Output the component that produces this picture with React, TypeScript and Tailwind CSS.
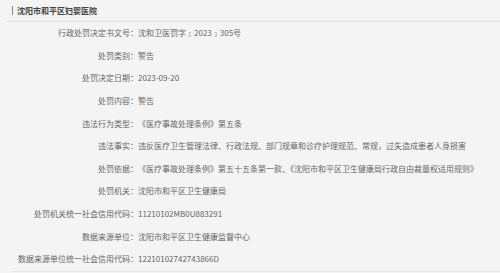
import React from "react";

const rows: [string, string][] = [
  ["行政处罚决定书文号：", "沈和卫医罚字﹝2023﹞305号"],
  ["处罚类别：", "警告"],
  ["处罚决定日期：", "2023-09-20"],
  ["处罚内容：", "警告"],
  ["违法行为类型：", "《医疗事故处理条例》第五条"],
  ["违法事实：", "违反医疗卫生管理法律、行政法规、部门规章和诊疗护理规范、常规，过失造成患者人身损害"],
  ["处罚依据：", "《医疗事故处理条例》第五十五条第一款、《沈阳市和平区卫生健康局行政自由裁量权适用规则》"],
  ["处罚机关：", "沈阳市和平区卫生健康局"],
  ["处罚机关统一社会信用代码：", "11210102MB0U883291"],
  ["数据来源单位：", "沈阳市和平区卫生健康监督中心"],
  ["数据来源单位统一社会信用代码：", "12210102742743866D"],
];

export default function App() {
  return (
    <div
      className="w-[500px] h-[273px] bg-[#f4f4f4] overflow-hidden"
      style={{ fontFamily: '"Noto Sans CJK SC", "Noto Sans", sans-serif' }}
    >
      <div className="ml-[6px] border-b border-[#dedede] h-[22px] flex items-center pl-[6px]">
        <span className="w-px h-[9px] bg-[#888] mr-[4px]" />
        <span className="text-[8px] font-bold text-[#444] leading-none">沈阳市和平区妇婴医院</span>
      </div>
      <div className="ml-[12px] border-b border-[#e6e6e6] flex flex-col">
        {rows.map(([k, v], i) => (
          <div key={i} className="h-[22.6px] flex items-center text-[8px] text-[#666] leading-none whitespace-nowrap">
            <span className="w-[126px] text-right shrink-0">{k}</span>
            <span>{v}</span>
          </div>
        ))}
      </div>
    </div>
  );
}
